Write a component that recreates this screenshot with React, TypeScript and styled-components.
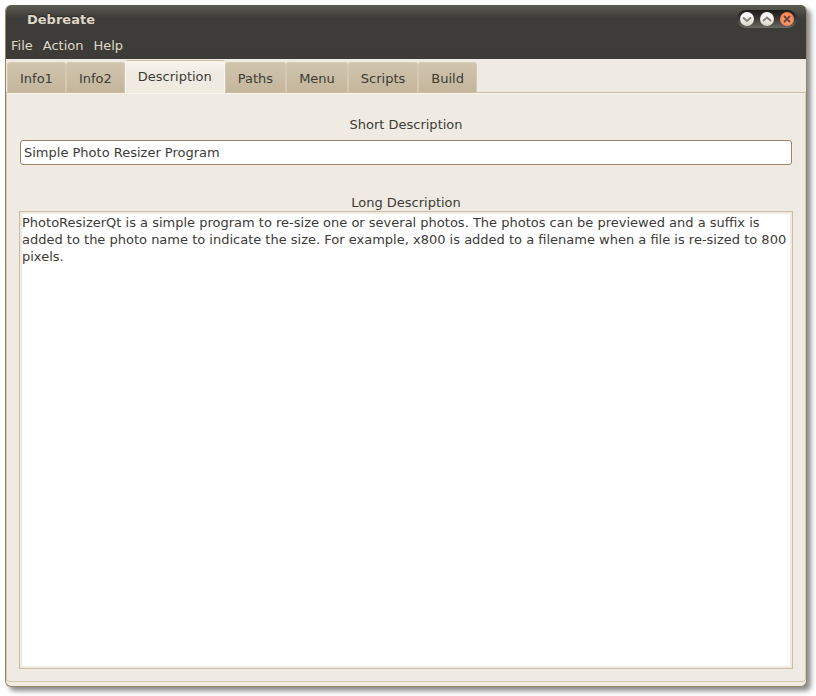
import React, { useState } from "react";
import styled, { createGlobalStyle, css } from "styled-components";

const GlobalStyle = createGlobalStyle`
  * { box-sizing: border-box; }
  body { margin: 0; background: #fff; }
  body, button, input, textarea {
    font-family: "DejaVu Sans", sans-serif;
    font-size: 13px;
    line-height: 17px;
    color: #3c3b37;
  }
`;

const Desktop = styled.div`
  display: flex;
  min-height: 100vh;
  padding: 5px 9px 9px 5px;
`;

const Window = styled.main`
  flex: 1;
  display: flex;
  flex-direction: column;
  min-width: 0;
  border: 1px solid #978468;
  border-top: 0;
  border-radius: 6px;
  background: #efebe3;
  box-shadow: 4px 4px 5px rgba(0, 0, 0, 0.45);
  overflow: hidden;
`;

const Header = styled.header`
  height: 54px;
  background: linear-gradient(#5f5e56 0, #55544d 3px, #3d3c38 13px, #3c3b37 100%);
`;

const TitleBar = styled.div`
  display: flex;
  align-items: center;
  justify-content: space-between;
  height: 28px;
  padding: 0 9px 0 21px;
`;

const Title = styled.h1`
  margin: 0;
  font-size: 13px;
  font-weight: bold;
  line-height: 17px;
  color: #dfd8c8;
  text-shadow: 0 -1px 1px #2a2926;
`;

const WindowControls = styled.div`
  display: flex;
  align-items: center;
  gap: 6px;
  height: 18px;
  padding: 0 3px;
  border-radius: 9px;
  background: linear-gradient(#1b1b19, #33322f 40%, #6a6963);
`;

const ControlButton = styled.button<{ $close?: boolean }>`
  display: flex;
  width: 14px;
  height: 14px;
  padding: 0;
  border: 0;
  border-radius: 50%;
  background: ${(p) =>
    p.$close
      ? "radial-gradient(circle at 50% 55%, #f9a27c, #f58a5c 55%, #e9602c)"
      : "linear-gradient(#ffffff, #f1eee8 55%, #d8d3c6)"};
`;

const MenuBar = styled.nav`
  display: flex;
  height: 26px;
  padding-bottom: 2px;
`;

const MenuButton = styled.button`
  padding: 0 5px;
  border: 0;
  background: none;
  color: #dfd8c8;
`;

const TabBar = styled.div`
  display: flex;
  align-items: flex-end;
  height: 34px;
  padding-left: 1px;
  border-bottom: 1px solid #cbbd9f;
`;

const Tab = styled.button<{ $active: boolean }>`
  height: 30px;
  padding: 1px 12px 0;
  border: solid #d6c9b4;
  border-width: 1px 1px 0;
  border-radius: 3px 3px 0 0;
  background: linear-gradient(#d0c4ad, #c4b69c);
  ${(p) =>
    p.$active &&
    css`
      height: 33px;
      margin-bottom: -1px;
      padding: 0 12px 1px;
      border-color: #cbbd9f #f8f5ee #f8f5ee;
      background: linear-gradient(#f8f5ef, #efebe3 40%, #efebe0);
    `}
`;

const Page = styled.section`
  flex: 1;
  display: flex;
  flex-direction: column;
  margin-bottom: 4px;
  padding: 22px 12px 12px;
  border: 1px solid #d6c9b4;
  border-top-color: #f7f4ee;
  border-radius: 0 0 4px 4px;
`;

const FieldLabel = styled.label`
  text-align: center;
`;

const Entry = styled.input`
  height: 25px;
  margin: 7px 1px 29px;
  padding: 0 3px 1px;
  border: 1px solid #978468;
  border-radius: 3px;
  background: #fff;
  box-shadow: 0 0 0 1px #f3eee2;
  outline: none;
`;

const LongText = styled.textarea`
  flex: 1;
  display: block;
  min-height: 60px;
  padding: 0;
  border: 0;
  background: #fff;
  resize: none;
  outline: none;
`;

const TextFrame = styled.div`
  flex: 1;
  display: flex;
  padding: 2px;
  border: 1px solid #cbbda5;
  background: #efebe0;
`;

const Glyph = ({ d, color }: { d: string; color: string }) => (
  <svg width="14" height="14" viewBox="0 0 14 14" fill="none" stroke={color} strokeWidth="1.8" aria-hidden="true">
    <path d={d} />
  </svg>
);

const menus = ["File", "Action", "Help"];
const tabs = ["Info1", "Info2", "Description", "Paths", "Menu", "Scripts", "Build"];

export default function App() {
  const [active, setActive] = useState("Description");
  const [short, setShort] = useState("Simple Photo Resizer Program");
  const [long, setLong] = useState(
    "PhotoResizerQt is a simple program to re-size one or several photos. The photos can be previewed and a suffix is added to the photo name to indicate the size. For example, x800 is added to a filename when a file is re-sized to 800 pixels."
  );
  return (
    <>
      <GlobalStyle />
      <Desktop>
        <Window>
          <Header>
            <TitleBar>
              <Title>Debreate</Title>
              <WindowControls>
                <ControlButton aria-label="Minimize">
                  <Glyph d="M3 5.5 L7 9 L11 5.5" color="#85827a" />
                </ControlButton>
                <ControlButton aria-label="Maximize">
                  <Glyph d="M3 9 L7 5.5 L11 9" color="#85827a" />
                </ControlButton>
                <ControlButton $close aria-label="Close">
                  <Glyph d="M4 4 L10 10 M10 4 L4 10" color="#6b4234" />
                </ControlButton>
              </WindowControls>
            </TitleBar>
            <MenuBar>
              {menus.map((m) => (
                <MenuButton key={m}>{m}</MenuButton>
              ))}
            </MenuBar>
          </Header>
          <TabBar role="tablist">
            {tabs.map((t) => (
              <Tab key={t} role="tab" aria-selected={t === active} $active={t === active} onClick={() => setActive(t)}>
                {t}
              </Tab>
            ))}
          </TabBar>
          <Page role="tabpanel">
            <FieldLabel htmlFor="short">Short Description</FieldLabel>
            <Entry id="short" value={short} onChange={(e) => setShort(e.target.value)} />
            <FieldLabel htmlFor="long">Long Description</FieldLabel>
            <TextFrame>
              <LongText id="long" spellCheck={false} value={long} onChange={(e) => setLong(e.target.value)} />
            </TextFrame>
          </Page>
        </Window>
      </Desktop>
    </>
  );
}
